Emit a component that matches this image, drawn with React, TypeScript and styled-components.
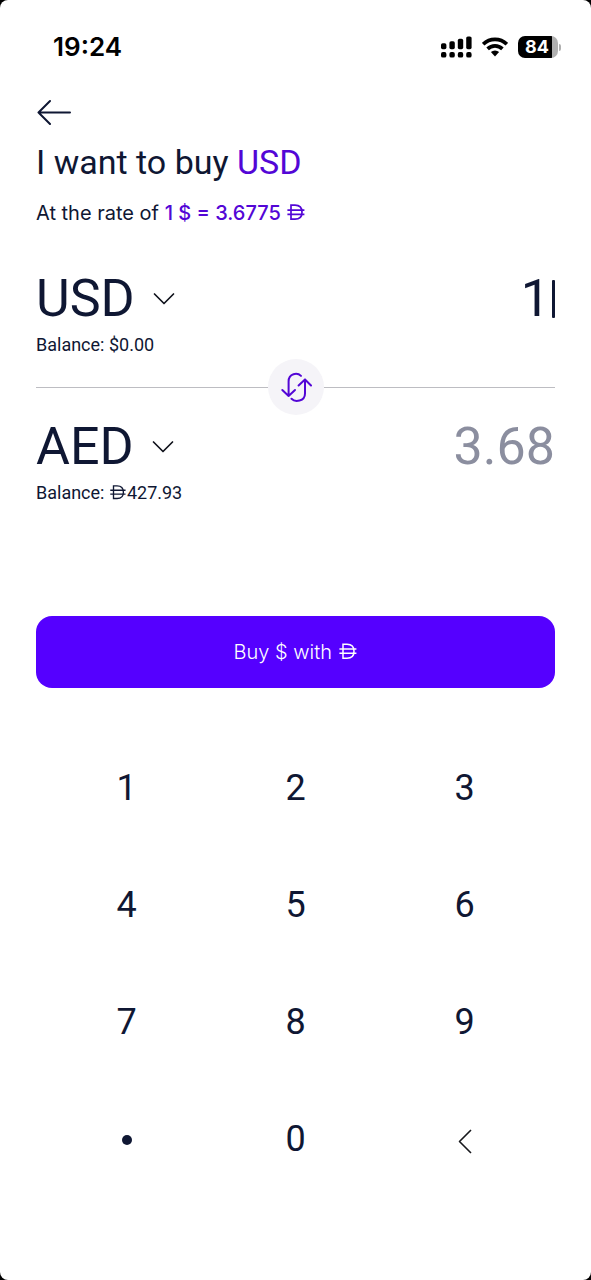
import React, { useState } from "react";
import styled, { createGlobalStyle, css } from "styled-components";

const ink = "#0f1733";
const violet = "#5306d6";
const display = `Roboto, "Liberation Sans", sans-serif`;

const GlobalStyle = createGlobalStyle`
  *, *::before, *::after { box-sizing: border-box; }
  html { background: #000; }
  body {
    margin: 0;
    color: ${ink};
    font-family: Inter, "Liberation Sans", sans-serif;
    -webkit-font-smoothing: antialiased;
  }
  button, input, select { font: inherit; color: inherit; }
`;

const bareControl = css`
  margin: 0;
  padding: 0;
  border: 0;
  background: none;
  outline: none;
`;

const Screen = styled.div`
  min-height: 100vh;
  background: #fff;
  border-radius: 8px;
`;

const StatusBar = styled.header`
  display: flex;
  align-items: center;
  justify-content: space-between;
  height: 94px;
  padding: 0 30px 0 53px;
  color: #000;
`;

const Clock = styled.time`
  font-size: 26px;
  line-height: 32px;
  font-weight: 600;
`;

const StatusIcons = styled.div`
  display: flex;
  align-items: center;
  gap: 10px;
`;

const Battery = styled.div`
  display: flex;
  align-items: center;
  gap: 1px;
`;

const BatteryBody = styled.div`
  display: flex;
  align-items: center;
  justify-content: center;
  width: 40px;
  height: 22px;
  padding-right: 2px;
  border-radius: 7px;
  background: linear-gradient(to right, #000 84%, #b0b0b0 84%);
  color: #fff;
  font-size: 18px;
  line-height: 22px;
  font-weight: 700;
`;

const BatteryTip = styled.span`
  width: 2px;
  height: 7px;
  border-radius: 0 2px 2px 0;
  background: #b0b0b0;
`;

const Content = styled.main`
  padding: 0 36px;
`;

const IconButton = styled.button`
  ${bareControl}
  display: flex;
  align-items: center;
  height: 36px;
  cursor: pointer;
`;

const Title = styled.h1`
  margin: 10px 0 0;
  font-family: ${display};
  font-size: 34px;
  line-height: 44px;
  font-weight: 400;
`;

const Accent = styled.span`
  color: ${violet};
`;

const Rate = styled.p`
  margin: 15px 0 42px;
  font-size: 20px;
  line-height: 28px;
  font-weight: 400;
`;

const RateValue = styled.strong`
  color: ${violet};
  font-weight: 500;
`;

const AccountRow = styled.section`
  display: grid;
  grid-template-columns: auto 1fr;
  align-items: center;
  font-family: ${display};
`;

const CurrencyPicker = styled.label`
  display: flex;
  align-items: center;
  gap: 18px;
  height: 60px;
`;

const CurrencySelect = styled.select`
  ${bareControl}
  appearance: none;
  field-sizing: content;
  height: 60px;
  font-size: 52px;
  line-height: 60px;
  font-weight: 400;
`;

const AmountField = styled.div`
  display: flex;
  align-items: center;
  gap: 2px;
  min-width: 0;
`;

const AmountInput = styled.input<{ $muted?: boolean }>`
  ${bareControl}
  flex: 1;
  min-width: 0;
  height: 60px;
  text-align: right;
  font-size: 52px;
  line-height: 60px;
  font-weight: 400;
  color: ${(p) => (p.$muted ? "#8b8e9f" : ink)};
`;

const Caret = styled.span`
  width: 3px;
  height: 38px;
  border-radius: 1px;
  background: ${ink};
`;

const Balance = styled.p`
  grid-column: 1 / -1;
  margin: 4px 0 0;
  font-size: 18px;
  line-height: 24px;
  font-weight: 400;
`;

const Divider = styled.div`
  display: flex;
  align-items: center;
  height: 60px;
  &::before, &::after {
    content: "";
    flex: 1;
    height: 1px;
    background: #bdbdc2;
  }
`;

const SwapButton = styled.button`
  ${bareControl}
  display: grid;
  place-items: center;
  width: 56px;
  height: 56px;
  border-radius: 50%;
  background: #f5f4f8;
  cursor: pointer;
`;

const BuyButton = styled.button`
  ${bareControl}
  width: 100%;
  height: 72px;
  margin-top: 111px;
  border-radius: 16px;
  background: #5500ff;
  color: #fff;
  font-size: 20px;
  line-height: 28px;
  font-weight: 300;
  cursor: pointer;
`;

const Keypad = styled.div`
  display: grid;
  grid-template-columns: repeat(3, 1fr);
  grid-auto-rows: 117px;
  padding: 41px 6px 0;
`;

const Key = styled.button`
  ${bareControl}
  display: grid;
  place-items: center;
  font-family: ${display};
  font-size: 36px;
  line-height: 44px;
  font-weight: 400;
  cursor: pointer;
`;

const DirhamSvg = styled.svg`
  display: inline-block;
  width: 1em;
  height: 1em;
  overflow: visible;
  vertical-align: -2px;
`;

const Dirham = ({ weight = 1.5 }: { weight?: number }) => (
  <DirhamSvg viewBox="0 0 20 20" fill="none" stroke="currentColor" strokeWidth={weight} role="img" aria-label="AED">
    <path d="M5 3.2H9C13.6 3.2 16 6 16 10.2S13.6 17.2 9 17.2H5Z" />
    <path d="M1.4 8.1H18.4M1.4 12.3H18.4" />
  </DirhamSvg>
);

const Chevron = () => (
  <svg width="22" height="14" viewBox="0 0 22 14" fill="none" stroke="#11131c" strokeWidth="1.7" strokeLinecap="round" strokeLinejoin="round" aria-hidden="true">
    <path d="M1.5 2L11 11.5L20.5 2" />
  </svg>
);

const currencies = ["USD", "AED", "EUR"];
const digits = ["1", "2", "3", "4", "5", "6", "7", "8", "9"];

export default function App() {
  const [from, setFrom] = useState("USD");
  const [to, setTo] = useState("AED");
  const [amount, setAmount] = useState("1");
  const received = (Number(amount || 0) * 3.6775).toFixed(2);
  const press = (key: string) => setAmount((value) => value + key);

  return (
    <>
      <GlobalStyle />
      <Screen>
        <StatusBar>
          <Clock>19:24</Clock>
          <StatusIcons>
            <svg width="32" height="22" viewBox="0 0 32 22" fill="#000" aria-hidden="true">
              <rect x="1" y="7.2" width="5.4" height="6" rx="1.7" />
              <rect x="9.4" y="5.2" width="5.4" height="8" rx="1.7" />
              <rect x="17.8" y="2.8" width="5.4" height="10.4" rx="1.7" />
              <rect x="26.2" y="0.4" width="5.4" height="12.8" rx="1.7" />
              <rect x="1" y="16" width="5.4" height="5.6" rx="1.9" />
              <rect x="9.4" y="16" width="5.4" height="5.6" rx="1.9" />
              <rect x="17.8" y="16" width="5.4" height="5.6" rx="1.9" />
              <rect x="26.2" y="16" width="5.4" height="5.6" rx="1.9" />
            </svg>
            <svg width="26" height="20" viewBox="0 0 26 20" aria-hidden="true">
              <g fill="none" stroke="#000" strokeWidth="3.6">
                <path d="M1.2 7.2A16.8 16.8 0 0 1 24.8 7.2" />
                <path d="M5.6 11.9A10.5 10.5 0 0 1 20.4 11.9" />
              </g>
              <path d="M8.9 15.1A5.8 5.8 0 0 1 17.1 15.1L13 19.4Z" />
            </svg>
            <Battery>
              <BatteryBody>84</BatteryBody>
              <BatteryTip />
            </Battery>
          </StatusIcons>
        </StatusBar>

        <Content>
          <IconButton type="button" aria-label="Back">
            <svg width="36" height="26" viewBox="0 0 36 26" fill="none" stroke={ink} strokeWidth="2" strokeLinecap="round" strokeLinejoin="round" aria-hidden="true">
              <path d="M34 13.5H2.5M14 2L2.5 13.5L14 25" />
            </svg>
          </IconButton>
          <Title>
            I want to buy <Accent>USD</Accent>
          </Title>
          <Rate>
            At the rate of{" "}
            <RateValue>
              1 $ = 3.6775 <Dirham weight={1.7} />
            </RateValue>
          </Rate>

          <AccountRow>
            <CurrencyPicker>
              <CurrencySelect aria-label="Currency to buy" value={from} onChange={(e) => setFrom(e.target.value)}>
                {currencies.map((c) => (
                  <option key={c}>{c}</option>
                ))}
              </CurrencySelect>
              <Chevron />
            </CurrencyPicker>
            <AmountField>
              <AmountInput aria-label="Amount to buy" inputMode="decimal" value={amount} onChange={(e) => setAmount(e.target.value)} />
              <Caret />
            </AmountField>
            <Balance>Balance: $0.00</Balance>
          </AccountRow>

          <Divider>
            <SwapButton type="button" aria-label="Swap currencies">
              <svg width="32" height="32" viewBox="0 0 32 32" fill="none" stroke={violet} strokeWidth="2" strokeLinecap="round" strokeLinejoin="round" aria-hidden="true">
                <path d="M21 4.9C17.500 1.400 8.600 2 8.600 10.500V25M2.300 19L8.600 25L15 19" />
                <path d="M11.500 27.800C15 31.500 25 30.500 25 22.500V8.500M18.600 14.500L25 8.500L31 14.500" />
              </svg>
            </SwapButton>
          </Divider>

          <AccountRow>
            <CurrencyPicker>
              <CurrencySelect aria-label="Currency to pay with" value={to} onChange={(e) => setTo(e.target.value)}>
                {currencies.map((c) => (
                  <option key={c}>{c}</option>
                ))}
              </CurrencySelect>
              <Chevron />
            </CurrencyPicker>
            <AmountField>
              <AmountInput $muted aria-label="Amount to pay" readOnly value={received} />
            </AmountField>
            <Balance>
              Balance: <Dirham />427.93
            </Balance>
          </AccountRow>

          <BuyButton type="button">
            Buy $ with <Dirham />
          </BuyButton>

          <Keypad>
            {digits.map((d) => (
              <Key key={d} type="button" onClick={() => press(d)}>
                {d}
              </Key>
            ))}
            <Key type="button" aria-label="Decimal point" onClick={() => press(".")}>
              <svg width="10" height="14" viewBox="0 0 10 14" fill={ink} aria-hidden="true">
                <circle cx="5" cy="8" r="5" />
              </svg>
            </Key>
            <Key type="button" onClick={() => press("0")}>
              0
            </Key>
            <Key type="button" aria-label="Delete" onClick={() => setAmount((v) => v.slice(0, -1))}>
              <svg width="14" height="30" viewBox="0 0 14 30" fill="none" stroke="#17181c" strokeWidth="1.600" strokeLinejoin="round" aria-hidden="true">
                <path d="M13 6L1.500 17.500L13 29" />
              </svg>
            </Key>
          </Keypad>
        </Content>
      </Screen>
    </>
  );
}
